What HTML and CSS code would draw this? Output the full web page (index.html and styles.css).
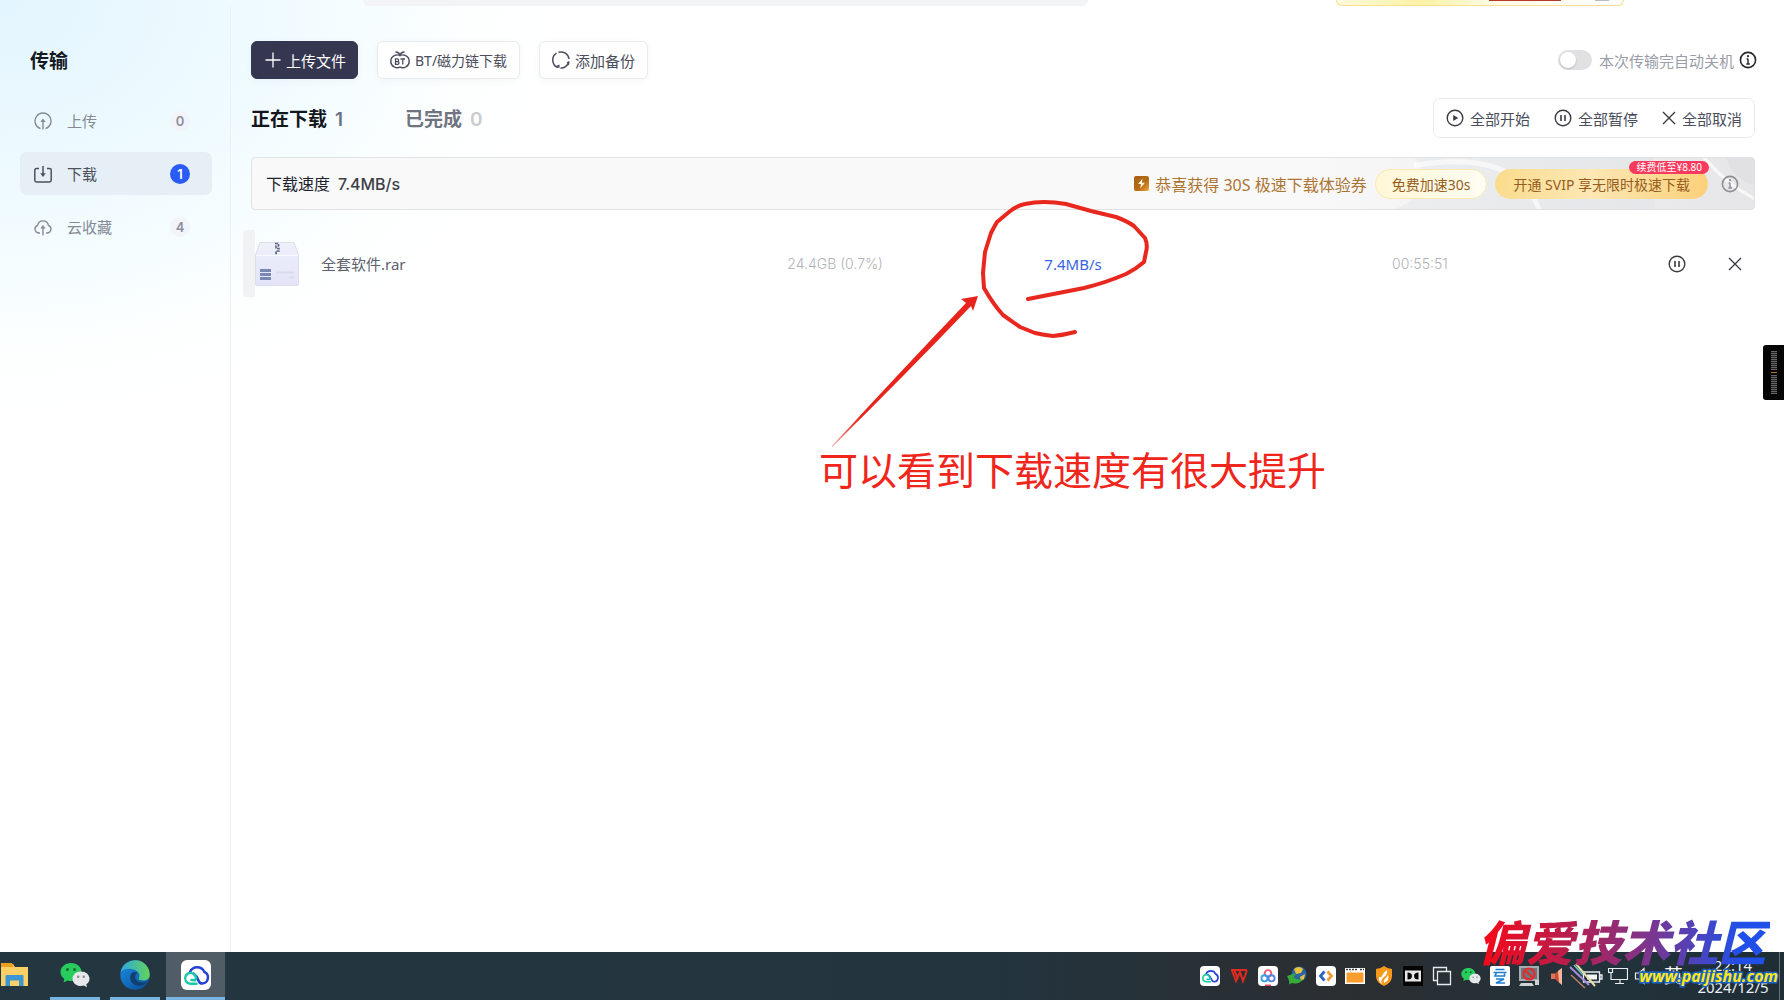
FILE: index.html
```html
<!DOCTYPE html>
<html lang="zh-CN">
<head>
<meta charset="utf-8">
<meta name="viewport" content="width=device-width, initial-scale=1">
<title>传输</title>
<link rel="stylesheet" href="styles.css">
</head>
<body>
<svg class="defs" aria-hidden="true">
  <defs>
    <linearGradient id="edge-a" x1="0" y1="0" x2="1" y2="0"><stop offset="0" stop-color="#2ea8e0"/><stop offset="1" stop-color="#62d35a"/></linearGradient>
    <linearGradient id="edge-b" x1="0" y1="0" x2="1" y2="1"><stop offset="0" stop-color="#1b8fe0"/><stop offset="1" stop-color="#0c4a9a"/></linearGradient>
    <linearGradient id="gold" x1="0" y1="0" x2="1" y2="1"><stop offset="0" stop-color="#a65f14"/><stop offset=".6" stop-color="#b96e17"/><stop offset="1" stop-color="#f0a93c"/></linearGradient>
    <linearGradient id="box" x1="0" y1="0" x2="0" y2="1"><stop offset="0" stop-color="#eef0fa"/><stop offset="1" stop-color="#e3e4f8"/></linearGradient>
    <linearGradient id="arrow" x1="0" y1="1" x2="1" y2="0"><stop offset="0" stop-color="#e8231c" stop-opacity=".5"/><stop offset=".2" stop-color="#e8231c"/></linearGradient>
    <symbol id="play" viewBox="0 0 18 18"><circle cx="9" cy="9" r="7.8" fill="none" stroke="currentColor" stroke-width="1.4"/><path d="M7.2 6v6l5-3z" fill="currentColor"/></symbol>
    <symbol id="pause" viewBox="0 0 18 18"><circle cx="9" cy="9" r="7.8" fill="none" stroke="currentColor" stroke-width="1.4"/><path d="M7 6v6M11 6v6" stroke="currentColor" stroke-width="1.6"/></symbol>
    <symbol id="close" viewBox="0 0 14 14"><path d="M1 1l12 12M13 1L1 13" stroke="currentColor" stroke-width="1.4" fill="none"/></symbol>
    <symbol id="info" viewBox="0 0 18 18"><circle cx="9" cy="9" r="7.6" fill="none" stroke="currentColor" stroke-width="1.6"/><path d="M9 7.8v5.4M7.6 8h1.5M7.4 13h3.4" stroke="currentColor" stroke-width="1.4"/><circle cx="9" cy="5.2" r="1.1" fill="currentColor"/></symbol>
    <symbol id="netdisk" viewBox="0 0 30 30"><rect width="30" height="30" rx="6" fill="#fff"/><path d="M9 12A7.900 7.900 0 0 1 23.300 11.800 6.200 6.200 0 0 1 21.500 23.600Q18.500 23.600 17.500 20.500 16 16 12.500 13.500" fill="none" stroke="#2740d8" stroke-width="2.500" stroke-linecap="round"/><path d="M15.500 23.700H9.300A5.400 5.400 0 1 1 13.800 15Q16 18 14.200 20.200L10.500 20" fill="none" stroke="#17c9a4" stroke-width="2.400" stroke-linecap="round"/></symbol>
    <symbol id="wechat" viewBox="0 0 30 26"><path d="M11 1C5 1 .5 5 .5 10c0 3 1.500 5.200 3.800 6.800L3.500 20.500l4-2q1.700.5 3.500.5c6 0 10.500-4 10.500-9S17 1 11 1z" fill="#27cc5c"/><circle cx="7.500" cy="7.500" r="1.500" fill="#136b30"/><circle cx="14.500" cy="7.500" r="1.500" fill="#136b30"/><path d="M21 9.500c-5 0-8.500 3.200-8.500 7.200S16 24 21 24q1.400 0 2.800-.4l3.200 1.700-.7-3c1.900-1.300 3.200-3.300 3.200-5.600 0-4-3.500-7.200-8.500-7.200z" fill="#e6e7ea"/><circle cx="18.200" cy="14.800" r="1.200" fill="#888"/><circle cx="23.800" cy="14.800" r="1.200" fill="#888"/></symbol>
  </defs>
</svg>

<div class="screen">
  <div class="app">
    <header class="topstrip" aria-hidden="true">
      <div class="search-edge"></div>
      <div class="promo-edge"><span class="promo-red"></span><span class="promo-dot"></span></div>
    </header>

    <div class="body">
      <aside class="sidebar">
        <h1 class="side-title">传输</h1>
        <nav class="side-nav">
          <a class="nav-item" href="#upload">
            <svg class="icon18" viewBox="0 0 18 18" fill="none" stroke="currentColor" stroke-width="1.400"><path d="M6.500 16.600a8 8 0 1 1 5 0M9 17.500V8.500"/><path d="M9 6.500L6.300 10h5.400z" fill="currentColor" stroke="none"/></svg>
            <span class="nav-label">上传</span><span class="count">0</span>
          </a>
          <a class="nav-item active" href="#download">
            <svg class="icon18" viewBox="0 0 18 18" fill="none" stroke="currentColor" stroke-width="1.500"><path d="M5 3.500H2.500Q.8 3.500.8 5.200V15.300Q.8 17 2.500 17H15.500Q17.200 17 17.200 15.300V5.200Q17.200 3.500 15.500 3.500H13M9 1v8"/><path d="M9 12L6.200 8.300h5.600z" fill="currentColor" stroke="none"/></svg>
            <span class="nav-label">下载</span><span class="count">1</span>
          </a>
          <a class="nav-item" href="#cloud">
            <svg class="icon18" viewBox="0 0 18 18" fill="none" stroke="currentColor" stroke-width="1.400"><path d="M6 15H4.500A4 4 0 0 1 3.600 7.300 5.500 5.500 0 0 1 14.400 7.300 4 4 0 0 1 13.500 15H12M9 17.500V9.500"/><path d="M9 7L6.300 10.500h5.400z" fill="currentColor" stroke="none"/></svg>
            <span class="nav-label">云收藏</span><span class="count">4</span>
          </a>
        </nav>
      </aside>

      <main class="main">
        <div class="actions">
          <button class="btn primary" type="button">
            <svg class="icon16" viewBox="0 0 16 16"><path d="M8 .5v15M.5 8h15" stroke="currentColor" stroke-width="1.300"/></svg>上传文件</button>
          <button class="btn small" type="button">
            <svg class="icon20" viewBox="0 0 20 18" fill="none" stroke="currentColor" stroke-width="1.400"><path d="M10 4.500C13 2.800 19.200 4.800 19.200 10.400 19.200 15.500 13.500 17.800 10 16.200 6.500 17.800.8 15.500.8 10.400.8 4.800 7 2.800 10 4.500zM5.500 1Q9 .8 10 4Q11 .8 14.500 1"/><path d="M5.500 7.800v5.600h2.200q1.400-.2 1.300-1.500-.1-1.100-1.300-1.300 1-.4.9-1.500-.2-1.200-1.300-1.300zM5.500 10.600h2M10.500 8h4.500M12.800 8v5.600" stroke-width="1.300"/></svg>BT/磁力链下载</button>
          <button class="btn" type="button">
            <svg class="icon18" viewBox="0 0 18 18" fill="none" stroke="currentColor" stroke-width="1.500"><path d="M4.500 2.200A8.100 8.100 0 0 0 6 16.600M6.500 1.300A8.100 8.100 0 0 1 17 8M16.800 10.500A8.100 8.100 0 0 1 8.500 17.100"/><path d="M14.500 11.500l3-1-.5 4zM4 15l3.500-1.500v3.800z" fill="currentColor" stroke="none"/></svg>添加备份</button>
          <div class="shutdown">
            <input class="switch" type="checkbox" id="auto-off">
            <label for="auto-off">本次传输完自动关机</label>
            <svg class="icon18 dark" role="img" aria-label="说明"><use href="#info"/></svg>
          </div>
        </div>

        <div class="tabs-row">
          <div class="tabs">
            <a class="tab current" href="#doing">正在下载<span class="num">1</span></a>
            <a class="tab" href="#done">已完成<span class="num">0</span></a>
          </div>
          <div class="batch">
            <button type="button"><svg class="icon18"><use href="#play"/></svg>全部开始</button>
            <button type="button"><svg class="icon18"><use href="#pause"/></svg>全部暂停</button>
            <button type="button"><svg class="icon14"><use href="#close"/></svg>全部取消</button>
          </div>
        </div>

        <section class="banner">
          <svg class="banner-art" viewBox="0 0 400 52" preserveAspectRatio="xMaxYMid slice" aria-hidden="true">
            <path d="M60 0H300V52H40Q90 30 60 0z" fill="#dcdde0" opacity=".3"/>
            <path d="M60 8C130-4 170 12 185 52" fill="none" stroke="#fff" stroke-width="5" opacity=".6"/>
            <path d="M350 0Q375 30 410 46" fill="none" stroke="#fff" stroke-width="3" opacity=".7"/>
            <path d="M372-2q4 22 28 30V-2z" fill="#d9dadc" opacity=".4"/>
          </svg>
          <div class="speed"><span>下载速度</span><strong>7.4MB/s</strong></div>
          <div class="offer">
            <svg class="icon15" viewBox="0 0 15 15" aria-hidden="true"><rect width="15" height="15" rx="2" fill="url(#gold)"/><path d="M8.500 2.500L4 8h3l-.8 4.500L11 6.800H8z" fill="#fff3d6"/></svg>
            <span class="offer-text">恭喜获得 30S 极速下载体验券</span>
            <button class="pill free" type="button">免费加速30s</button>
            <button class="pill svip" type="button">开通 SVIP 享无限时极速下载<span class="tag">续费低至¥8.80</span></button>
            <svg class="icon18 muted" role="img" aria-label="说明"><use href="#info"/></svg>
          </div>
        </section>

        <table class="files">
          <colgroup><col class="c-name"><col class="c-size"><col class="c-speed"><col class="c-time"><col class="c-act"></colgroup>
          <tbody>
            <tr>
              <td class="name-cell"><div class="name">
                <svg class="archive" viewBox="0 0 44 46" aria-hidden="true"><path d="M5 1.500H39L43.500 14V43q0 1.500-1.500 1.500H2Q.5 44.500.5 43V14z" fill="url(#box)" stroke="#dcdeea"/><path d="M1 14.500H43" stroke="#fafaff" stroke-width="1.200"/><path d="M20 2.500h3.500v2.500h-2.500v2.500h3v2.500h-3v2.500h2" fill="none" stroke="#5b6585" stroke-width="1.600" stroke-dasharray="3 1"/><path d="M5 29.500h11M5 33.500h11M5 37.500h11" stroke="#7b88b4" stroke-width="3"/><path d="M21 31.500h18M34 36.500h5" stroke="#d9dbea" stroke-width="2"/></svg>
                <span>全套软件.rar</span></div></td>
              <td class="faint">24.4GB (0.7%)</td>
              <td class="rate">7.4MB/s</td>
              <td class="faint">00:55:51</td>
              <td><div class="row-actions">
                <button type="button" aria-label="暂停"><svg class="icon18"><use href="#pause"/></svg></button>
                <button type="button" aria-label="取消"><svg class="icon14"><use href="#close"/></svg></button>
              </div></td>
            </tr>
          </tbody>
        </table>
      </main>
    </div>
  </div>

  <footer class="taskbar">
    <div class="pinned">
      <button class="task explorer" type="button" aria-label="文件资源管理器"><svg width="28" height="24" viewBox="0 0 28 24"><path d="M0 1h12l2 3h13v19H0z" fill="#fbd067"/><path d="M0 0h11l1.500 4H0z" fill="#e9a01c"/><path d="M4.500 23V13q0-1 1-1h16q1 0 1 1v10h-4.500v-5.500h-9V23z" fill="#3d95d4"/></svg></button>
      <button class="task open" type="button" aria-label="微信"><svg width="30" height="26"><use href="#wechat"/></svg></button>
      <button class="task open" type="button" aria-label="Edge"><svg width="30" height="30" viewBox="0 0 30 30"><circle cx="15" cy="15" r="14.700" fill="url(#edge-b)"/><path d="M.6 12A14.700 14.700 0 0 1 29.700 15.500C29.500 20 24 21.800 19.200 19.800 17.500 18.500 20 17.500 19.300 14.500 17.500 8.500 6 6.500.6 12z" fill="url(#edge-a)"/><path d="M12.500 12.500C7 17 12 27.500 21 25.500 25 24.800 27 22.500 27.500 21.500 23 24 15.500 22.500 15 17q0-2.500 2.500-4-2.500-1.500-5-.5z" fill="#123f6e"/></svg></button>
      <button class="task open focus" type="button" aria-label="网盘"><svg width="30" height="30"><use href="#netdisk"/></svg></button>
    </div>
    <div class="tray">
      <svg class="tray-icon"><use href="#netdisk"/></svg>
      <svg class="tray-icon" viewBox="0 0 20 20"><path d="M2 4h16M3 4.500L7 15l4-9 3 9 4-10.500M5.500 4.500L9 13" fill="none" stroke="#e0291f" stroke-width="2"/></svg>
      <svg class="tray-icon" viewBox="0 0 20 20"><rect width="20" height="20" rx="4" fill="#fff"/><g fill="none" stroke-width="1.900"><circle cx="10" cy="7.500" r="3.400" stroke="#e95a72"/><circle cx="6.500" cy="12.300" r="3.100" stroke="#36a2e8"/><circle cx="13.500" cy="12.300" r="3.100" stroke="#5b80e0"/></g><path d="M7 19.300h6" stroke="#e9405a" stroke-width="1.500"/></svg>
      <svg class="tray-icon" viewBox="0 0 20 20"><circle cx="12" cy="8" r="7.500" fill="#2c63a4"/><path d="M7 3q5-4 9 0l-2 4-5 1zM13 11l5-3-1 5-3 2z" fill="#e8c23d"/><path d="M0 10l9-3-2.500 4.500q4 3 9.500 1.500-4 6-11 4l-3 1.500q1-3-2-8.500z" fill="#37ac36"/></svg>
      <svg class="tray-icon" viewBox="0 0 20 20"><rect width="20" height="20" rx="4" fill="#fff"/><path d="M8.500 5.500L4.500 10l4 4.500" fill="none" stroke="#2c62c8" stroke-width="2.800"/><path d="M11.500 5.500l4 4.500-4 4.500" fill="none" stroke="#f29a33" stroke-width="2.800"/></svg>
      <svg class="tray-icon" viewBox="0 0 20 20"><path d="M0 2h20v16H0z" fill="#fff"/><path d="M1 3.500h12M15 3.500h4" stroke="#444" stroke-width="1.500" stroke-dasharray="2 1"/><path d="M1.500 6.500h17v10h-17z" fill="#f79e2e"/></svg>
      <svg class="tray-icon" viewBox="0 0 20 20"><path d="M10 0q4 3 8 3v7q0 7-8 10-8-3-8-10V3q4 0 8-3z" fill="#f79a1c"/><path d="M13 4q1 4-3 7t-2 7q-4-3-3-7 2 1 3-1 2-4 5-6zM14 9q2 5-4 8-1-3 2-5z" fill="#fff"/></svg>
      <svg class="tray-icon" viewBox="0 0 20 20"><rect width="20" height="20" fill="#050505"/><rect x="2" y="4.500" width="16" height="11" fill="#e6e6e6"/><path d="M4.500 6.500Q9 6.500 9 10T4.500 13.500zM15.500 6.500Q11 6.500 11 10t4.500 3.500z" fill="#050505"/></svg>
      <svg class="tray-icon" viewBox="0 0 20 20"><path d="M5 14.500H1.500V1.500h13V5M5.500 5.500h13v13h-13z" fill="none" stroke="#e7eaec" stroke-width="1.300"/></svg>
      <svg class="tray-icon"><use href="#wechat"/></svg>
      <svg class="tray-icon" viewBox="0 0 20 20"><rect width="20" height="20" rx="2" fill="#fff"/><path d="M5.500 3.500h9M3.500 6.500h13M6.500 6.500L5 10h9.500V7.500M6 13h8L6 17h9" fill="none" stroke="#1d7fd4" stroke-width="1.600"/></svg>
      <svg class="tray-icon" viewBox="0 0 20 20"><path d="M0 0h20v15H0z" fill="#a9adb3"/><path d="M2 2h16v11H2z" fill="#70767d"/><path d="M2 17h11l2 3H0zM16 14h4v5h-4z" fill="#cfd2d5"/><circle cx="10" cy="8" r="5.500" fill="none" stroke="#e02d2d" stroke-width="2.200"/><path d="M6 4.500l8 7" stroke="#e02d2d" stroke-width="2.200"/></svg>
      <svg class="tray-icon" viewBox="0 0 20 20"><path d="M3 7.500h4V13H3z" fill="#d8765a"/><path d="M7 7.500L14 2v17l-7-6z" fill="#cf4a33"/><path d="M10 5l4-3v17l-3-2.500z" fill="#f0b6a0"/></svg>
      <svg class="battery" width="34" height="26" viewBox="0 0 34 26"><path d="M14.500 9h16v10h-16zM31 12h2v4h-2z" fill="none" stroke="#e9edf0" stroke-width="1.300"/><path d="M18 11.500h10v5H18z" fill="#f3f5f6"/><path d="M1 4l19 18" stroke="#a78adf" stroke-width="2"/><path d="M7 1l19 22" stroke="#eadfa6" stroke-width="2"/><path d="M2 12l14 13" stroke="#be8068" stroke-width="1.500"/><path d="M5 2l9 10" stroke="#66c9c5" stroke-width="1.500"/></svg>
      <svg class="tray-icon" viewBox="0 0 20 20"><path d="M5 2.500h14.500v11H3V7M12 13.500V17M7 17.500h9M.5 2.500h4v4h-4z" fill="none" stroke="#e9edf0" stroke-width="1.200"/></svg>
      <svg class="tray-icon volume" viewBox="0 0 20 20"><path d="M1.500 7H5l5-4.500v15L5 13H1.500zM13 7q2 3 0 6" fill="none" stroke="#e9edf0" stroke-width="1.200"/></svg>
      <span class="ime">英</span>
      <div class="clock"><span>22:14</span><span>2024/12/5</span></div>
      <span class="show-desktop"></span>
    </div>
  </footer>

  <svg class="ink" width="340" height="290" viewBox="820 190 340 290" aria-hidden="true">
    <path d="M1075 332Q1064 335 1053 336 1044 335 1035 333L1020 327 1003 315Q993 304 984 288L983 273 985 252 991 233Q994 227 997 222L1009 212Q1018 205 1025 204 1034 202 1044 202 1055 202 1066 204L1091 211 1116 217Q1127 221 1134 226L1145 238Q1148 245 1146 252L1144 262Q1136 269 1126 274 1105 283 1084 288L1028 299" fill="none" stroke="#e8281e" stroke-width="4" stroke-linecap="round" stroke-linejoin="round"/>
    <path d="M832 446Q900 372 966 303L961 299 978 296 973 311 971 306Q905 375 832 447z" fill="url(#arrow)"/>
  </svg>
  <p class="note">可以看到下载速度有很大提升</p>

  <div class="dock-handle" aria-hidden="true"><span class="grip"></span><span class="grip-mark"></span><span class="grip"></span></div>
  <div class="watermark"><span class="wm-name">偏爱技术社区</span><span class="wm-url">www.paijishu.com</span></div>
</div>
</body>
</html>
```
FILE: styles.css
```css
* { box-sizing: border-box; }
body {
  margin: 0;
  font-family: "Noto Sans", "Noto Sans CJK SC", sans-serif;
  font-size: 15px;
  color: #4a4d5c;
  background: #fff;
}
a { color: inherit; text-decoration: none; }
button { font: inherit; color: inherit; background: none; border: 0; padding: 0; margin: 0; cursor: pointer; }
svg { flex: none; display: block; }
.defs { position: absolute; width: 0; height: 0; }
.icon14 { width: 14px; height: 14px; }
.icon15 { width: 15px; height: 15px; }
.icon16 { width: 16px; height: 16px; }
.icon18 { width: 18px; height: 18px; }
.icon20 { width: 20px; height: 18px; }

.screen { position: relative; min-height: 100vh; display: flex; flex-direction: column; overflow: hidden; }
.app {
  flex: 1; display: flex; flex-direction: column;
  background: radial-gradient(ellipse 560px 420px at 0 0, #e3f5fe 0, #f0fbff 50%, #fdffff 85%, #fff 100%), #fff;
}

/* lower edge of the window header */
.topstrip { height: 6px; display: flex; justify-content: space-between; padding: 0 160px 0 363px; }
.search-edge { flex: 0 1 725px; background: #f3f4f6; border-radius: 0 0 6px 6px; }
.promo-edge {
  flex: 0 1 288px; display: flex; align-items: flex-start; justify-content: flex-end; gap: 34px; padding-right: 14px;
  border: solid #f5e092; border-width: 0 1px 1px; border-radius: 0 0 7px 7px;
  background: linear-gradient(90deg, #fffadb, #fdf2a6 30%, #fffbe8 55%, #fff);
}
.promo-red { width: 72px; height: 1px; background: #b83a24; }
.promo-dot { width: 14px; height: 1px; background: #b8bac4; }

.body { flex: 1; display: flex; }
.sidebar { flex: 0 0 231px; padding: 41px 18px 0 20px; border-right: 1px solid #edf1f5; }
.side-title { margin: 0 0 24px 10px; font-size: 19px; line-height: 28px; font-weight: 700; color: #16181f; }
.side-nav { display: grid; gap: 10px; }
.nav-item { height: 43px; display: flex; align-items: center; padding: 0 22px 0 14px; border-radius: 7px; color: #858a95; }
.nav-label { flex: 1; margin-left: 15px; line-height: 22px; }
.nav-item.active { background: #e6eff5; color: #4c515e; }
.count {
  width: 20px; height: 20px; border-radius: 50%; background: #f2f4f9; color: #8c909c;
  font: 600 13px/20px Inter, sans-serif; text-align: center;
}
.active .count { background: #2a5cf5; color: #fff; }

.main { flex: 1; min-width: 0; padding: 35px 29px 0 20px; }
.actions { display: flex; align-items: center; }
.btn {
  height: 38px; display: flex; align-items: center; gap: 5px; padding: 0 12px; margin-right: 19px;
  border: 1px solid #e8eaee; border-radius: 6px; background: #fff; box-shadow: 0 2px 8px #0000000a; white-space: nowrap;
}
.btn.primary { background: #353650; border-color: #353650; color: #fff; padding: 0 11px 0 13px; }
.btn.small { font-size: 14px; }
.shutdown { margin-left: auto; margin-right: -2px; display: flex; align-items: center; color: #9a9da8; }
.shutdown label { margin: 0 5px 0 7px; white-space: nowrap; }
.switch {
  appearance: none; width: 34px; height: 20px; margin: 0; border-radius: 10px; background: #e1e1e3;
  display: flex; align-items: center; padding: 2px; cursor: pointer;
}
.switch::before { content: ""; width: 16px; height: 16px; border-radius: 50%; background: #fff; box-shadow: 0 1px 2px #0003; }
.switch:checked { background: #2a5cf5; justify-content: flex-end; }
.dark { color: #26272c; }
.muted { color: #8d9096; }

.tabs-row { margin-top: 19px; display: flex; justify-content: space-between; align-items: center; }
.tabs { display: flex; gap: 60px; font-size: 19px; font-weight: 700; }
.tab { color: #6f7480; }
.tab.current { color: #14161d; }
.num { margin-left: 8px; font-family: Inter, sans-serif; font-weight: 600; color: #c9cbd1; }
.current .num { margin-right: 2px; color: #6c7184; }
.batch { height: 40px; display: flex; align-items: center; gap: 24px; padding: 0 12px; border: 1px solid #e9eaed; border-radius: 7px; background: #fff; }
.batch button { display: flex; align-items: center; gap: 6px; }
.batch svg, .row-actions svg { color: #3b3c42; }

.banner {
  position: relative; margin-top: 19px; height: 53px; display: flex; justify-content: space-between; align-items: center;
  padding: 0 15px 0 14px; border: 1px solid #e1e2e4; border-radius: 4px;
  background: linear-gradient(90deg, #f9f9f9 70%, #efeff0 85%, #e6e6e8);
}
.banner-art { position: absolute; right: 0; top: 0; width: 400px; height: 100%; }
.speed { display: flex; gap: 8px; font-size: 16px; line-height: 22px; color: #20222e; }
.speed strong { font: 500 16px/22px Inter, sans-serif; color: #3c3e49; }
.offer { position: relative; display: flex; align-items: center; color: #ad7533; }
.offer-text { margin: 0 8px 0 6px; font-size: 16px; white-space: nowrap; }
.pill { position: relative; height: 30px; padding: 0 16px; border-radius: 15px; font-size: 14px; color: #965d1c; white-space: nowrap; }
.free { margin-right: 8px; border: 1px solid #fbe8b4; background: linear-gradient(90deg, #fff7d6, #fffdf2); }
.svip { margin-right: 13px; padding: 0 18px; background: linear-gradient(90deg, #fbdc8e, #fde7b4 45%, #fcd07a); }
.tag {
  position: absolute; right: -1px; top: -8px; height: 13px; padding: 0 7px; border-radius: 7px;
  background: #fb3a5d; color: #fff; font-size: 10px; line-height: 13px;
}

.files { margin: 20px 0 0 -8px; width: calc(100% + 8px); border-collapse: collapse; table-layout: fixed; }
.files td { height: 67px; padding: 0; vertical-align: middle; }
.c-name { width: 36%; }
.c-size { width: 17%; }
.c-speed { width: 23%; }
.c-act { width: 7%; }
.name { height: 67px; display: flex; align-items: center; gap: 22px; border-left: 12px solid #f0f2f3; border-radius: 4px 0 0 4px; font-size: 15px; color: #5d616d; }
.archive { width: 44px; height: 46px; }
.files .faint { color: #b0b2b8; font-family: Inter, sans-serif; font-weight: 300; font-size: 14px; }
.files .rate { color: #3763e4; font-size: 15px; }
.row-actions { display: flex; align-items: center; justify-content: flex-end; gap: 42px; padding-right: 13px; }

.taskbar { height: 48px; display: flex; justify-content: space-between; background: linear-gradient(90deg, #243640, #23343e 55%, #2b2e31 76%, #22323b 90%, #1f2d35); }
.pinned { display: flex; }
.task { width: 50px; margin-right: 10px; display: grid; place-items: center; border-bottom: 3px solid transparent; }
.task.explorer { width: 40px; justify-items: start; padding-left: 1px; }
.task.open { border-bottom-color: #78b5e2; }
.task.focus { width: 59px; margin-left: -4px; background-color: #515d66; }
.tray { display: flex; align-items: center; gap: 9px; padding-right: 4px; }
.tray-icon { width: 20px; height: 20px; }
.battery { margin: 0 -4px 0 -8px; }
.volume { margin-left: -3px; }
.ime { margin: 0 4px 0 1px; color: #fff; font-size: 19px; line-height: 24px; }
.clock { width: 74px; display: grid; justify-items: center; color: #edf1f3; font-size: 15px; line-height: 22px; }
.show-desktop { width: 1px; align-self: stretch; background: #68747b; }

/* hand-drawn marks over the window */
.ink { position: absolute; left: 820px; top: 190px; pointer-events: none; }
.note { position: absolute; left: 819px; top: 442px; margin: 0; font-size: 39px; line-height: 56px; color: #f0261c; white-space: nowrap; }

.dock-handle { position: absolute; right: 0; top: 345px; width: 21px; height: 55px; padding: 6px 0; display: grid; justify-items: center; gap: 2px; border-radius: 3px 0 0 3px; background: #050505; }
.grip { width: 6px; height: 19px; background: repeating-linear-gradient(#666 0 1px, #222 1px 2px); }
.grip-mark { width: 6px; height: 1px; background: #b97a1e; }

.watermark { position: absolute; right: 6px; bottom: 15px; display: grid; justify-items: end; pointer-events: none; }
.wm-name {
  margin-right: 8px; padding: 0 4px; font-size: 48px; line-height: 48px; font-weight: 900; font-style: italic; white-space: nowrap;
  background: linear-gradient(90deg, #fb0714, #b71e4d 32%, #7a3690 60%, #2150e8 90%);
  -webkit-background-clip: text; background-clip: text; color: transparent;
}
.wm-url {
  font: italic 700 16px/18px "Open Sans", sans-serif; color: #ffe81a;
  -webkit-text-stroke: 3px #1c62c0; paint-order: stroke fill;
}
```
